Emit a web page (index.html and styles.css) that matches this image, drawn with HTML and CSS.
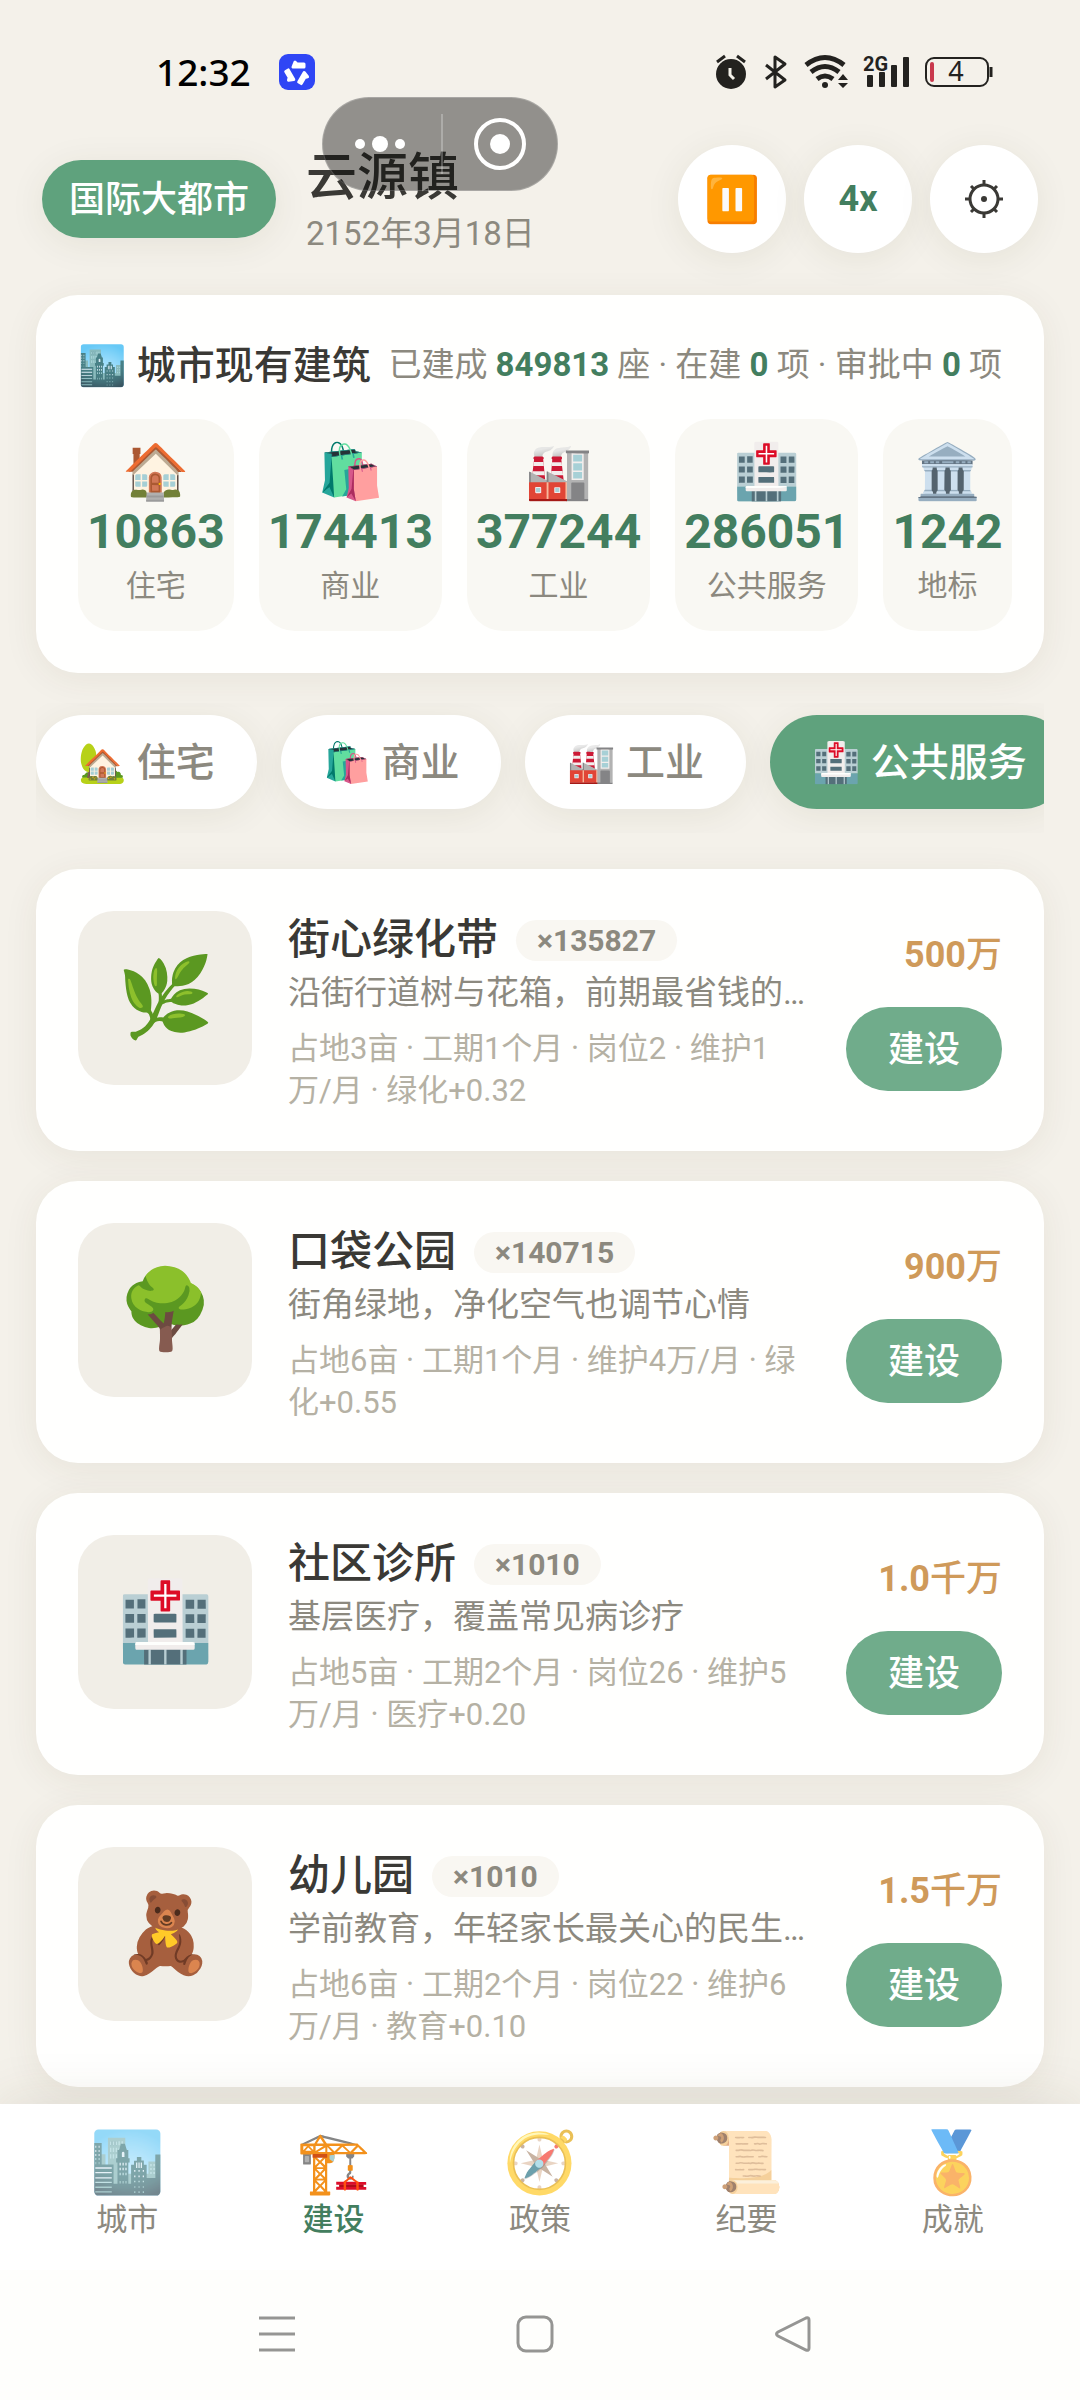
FILE: index.html
```html
<!DOCTYPE html>
<html lang="zh-CN">
  <head>
    <meta charset="UTF-8" />
    <meta name="viewport" content="width=device-width, initial-scale=1" />
    <title>云源镇</title>
    <link rel="stylesheet" href="styles.css" />
  </head>
  <body>
    <div class="app">
      <div class="statusbar">
        <span class="clock">12:32</span>
        <svg class="app-badge" viewBox="0 0 36 36" aria-hidden="true">
          <rect width="36" height="36" rx="9" fill="#2f46f5" />
          <g fill="#fff" stroke="#fff" stroke-width="3" stroke-linejoin="round">
            <path d="M16 8l-2 5h11v-3h-7z" />
            <path d="M16 8l-2 5h11v-3h-7z" transform="rotate(120 18 19)" />
            <path d="M16 8l-2 5h11v-3h-7z" transform="rotate(240 18 19)" />
          </g>
        </svg>
        <div class="status-icons">
          <svg width="32" height="36" viewBox="0 0 32 36" aria-hidden="true">
            <circle cx="16" cy="20" r="15" fill="#23221f" />
            <path d="M2 8l8-6M30 8l-8-6" stroke="#23221f" stroke-width="3" />
            <path d="M15 14v7l4 4" fill="none" stroke="#f4f1ea" stroke-width="3" />
          </svg>
          <svg width="26" height="36" viewBox="0 0 26 36" aria-hidden="true">
            <path d="M4 11l19 15-10 7V3l10 7L4 25" fill="none" stroke="#23221f" stroke-width="3" stroke-linejoin="round" />
          </svg>
          <svg width="45" height="36" viewBox="0 0 45 36" aria-hidden="true">
            <g fill="none" stroke="#23221f" stroke-width="5">
              <path d="M3 11q19-15 38 0" />
              <path d="M8 18q14-11 28 0" />
              <path d="M14 25q8-6 16 0" />
            </g>
            <circle cx="22" cy="31" r="3" fill="#23221f" />
            <path d="M40 20l5 6H35zM40 34l5-5H35z" fill="#23221f" />
          </svg>
          <svg width="47" height="36" viewBox="0 0 47 36" aria-hidden="true">
            <text class="net" x="0" y="17">2G</text>
            <g fill="#23221f">
              <rect x="4" y="21" width="6" height="12" rx="1" />
              <rect x="16" y="18" width="6" height="15" rx="1" />
              <rect x="28" y="11" width="6" height="22" rx="1" />
              <rect x="40" y="3" width="6" height="30" rx="1" />
            </g>
          </svg>
          <svg width="68" height="36" viewBox="0 0 68 36" aria-hidden="true">
            <rect x="1" y="4" width="62" height="28" rx="8" fill="none" stroke="#23221f" stroke-width="2" />
            <rect x="5" y="8" width="4" height="20" rx="2" fill="#c9394d" />
            <path d="M66 13v10" stroke="#23221f" stroke-width="3" />
            <text class="charge" x="31" y="27">4</text>
          </svg>
        </div>
      </div>

      <!-- host mini-program capsule, floats above the page -->
      <div class="capsule">
        <button class="capsule-btn" type="button" aria-label="更多">
          <svg width="52" height="52" viewBox="0 0 52 52" fill="#fff">
            <circle cx="6" cy="26" r="5" />
            <circle cx="26" cy="26" r="8" />
            <circle cx="46" cy="26" r="5" />
          </svg>
        </button>
        <button class="capsule-btn" type="button" aria-label="关闭">
          <svg width="52" height="52" viewBox="0 0 52 52">
            <circle cx="26" cy="26" r="24" fill="none" stroke="#fff" stroke-width="4" />
            <circle cx="26" cy="26" r="10" fill="#fff" />
          </svg>
        </button>
      </div>

      <header class="header">
        <span class="level">国际大都市</span>
        <div class="town">
          <h1>云源镇</h1>
          <time>2152年3月18日</time>
        </div>
        <div class="controls">
          <button class="round emoji" type="button" aria-label="暂停">⏸️</button>
          <button class="round speed" type="button">4x</button>
          <button class="round" type="button" aria-label="设置">
            <svg width="40" height="40" viewBox="0 0 40 40" fill="none" stroke="#3a3935">
              <circle cx="20" cy="20" r="14" stroke-width="3" />
              <path d="M20 6V1M20 34v5M6 20H1M34 20h5M10 10L7 7M30 10l3-3M10 30l-3 3M30 30l3 3" stroke-width="3" />
              <circle cx="20" cy="20" r="3" fill="#3a3935" stroke="none" />
            </svg>
          </button>
        </div>
      </header>

      <main>
        <section class="card summary">
          <div class="summary-head">
            <h2>🏙️ 城市现有建筑</h2>
            <p>已建成 <b>849813</b> 座 · 在建 <b>0</b> 项 · 审批中 <b>0</b> 项</p>
          </div>
          <div class="stats">
            <div class="stat"><span class="stat-icon">🏠</span><b>10863</b><span>住宅</span></div>
            <div class="stat"><span class="stat-icon">🛍️</span><b>174413</b><span>商业</span></div>
            <div class="stat"><span class="stat-icon">🏭</span><b>377244</b><span>工业</span></div>
            <div class="stat"><span class="stat-icon">🏥</span><b>286051</b><span>公共服务</span></div>
            <div class="stat"><span class="stat-icon">🏛️</span><b>1242</b><span>地标</span></div>
          </div>
        </section>

        <div class="tabs">
          <button class="tab" type="button">🏡 住宅</button>
          <button class="tab" type="button">🛍️ 商业</button>
          <button class="tab" type="button">🏭 工业</button>
          <button class="tab active" type="button">🏥 公共服务</button>
        </div>

        <div class="list">
          <article class="card item">
            <div class="thumb">🌿</div>
            <div class="info">
              <div class="name"><h3>街心绿化带</h3><span class="count">×135827</span></div>
              <p class="desc">沿街行道树与花箱，前期最省钱的…</p>
              <p class="spec">占地3亩 · 工期1个月 · 岗位2 · 维护1万/月 · 绿化+0.32</p>
            </div>
            <div class="buy">
              <span class="price">500<i>万</i></span>
              <button class="build" type="button">建设</button>
            </div>
          </article>

          <article class="card item">
            <div class="thumb">🌳</div>
            <div class="info">
              <div class="name"><h3>口袋公园</h3><span class="count">×140715</span></div>
              <p class="desc">街角绿地，净化空气也调节心情</p>
              <p class="spec">占地6亩 · 工期1个月 · 维护4万/月 · 绿化+0.55</p>
            </div>
            <div class="buy">
              <span class="price">900<i>万</i></span>
              <button class="build" type="button">建设</button>
            </div>
          </article>

          <article class="card item">
            <div class="thumb">🏥</div>
            <div class="info">
              <div class="name"><h3>社区诊所</h3><span class="count">×1010</span></div>
              <p class="desc">基层医疗，覆盖常见病诊疗</p>
              <p class="spec">占地5亩 · 工期2个月 · 岗位26 · 维护5万/月 · 医疗+0.20</p>
            </div>
            <div class="buy">
              <span class="price">1.0<i>千万</i></span>
              <button class="build" type="button">建设</button>
            </div>
          </article>

          <article class="card item">
            <div class="thumb">🧸</div>
            <div class="info">
              <div class="name"><h3>幼儿园</h3><span class="count">×1010</span></div>
              <p class="desc">学前教育，年轻家长最关心的民生…</p>
              <p class="spec">占地6亩 · 工期2个月 · 岗位22 · 维护6万/月 · 教育+0.10</p>
            </div>
            <div class="buy">
              <span class="price">1.5<i>千万</i></span>
              <button class="build" type="button">建设</button>
            </div>
          </article>
        </div>
      </main>

      <footer class="footer">
        <nav class="tabbar">
          <a href="#city"><span>🏙️</span>城市</a>
          <a class="active" href="#build"><span>🏗️</span>建设</a>
          <a href="#policy"><span>🧭</span>政策</a>
          <a href="#log"><span>📜</span>纪要</a>
          <a href="#awards"><span>🏅</span>成就</a>
        </nav>
        <div class="sysnav">
          <button type="button" aria-label="菜单">
            <svg width="36" height="36" viewBox="0 0 36 36"><path d="M0 2h36M0 18h36M0 34h36" /></svg>
          </button>
          <button type="button" aria-label="主页">
            <svg width="36" height="36" viewBox="0 0 36 36"><rect x="1" y="1" width="34" height="34" rx="8" /></svg>
          </button>
          <button type="button" aria-label="返回">
            <svg width="36" height="36" viewBox="0 0 36 36"><path d="M31 2L3 16q-3 2 0 4l28 14q3 1 3-2V4q0-3-3-2z" /></svg>
          </button>
        </div>
      </footer>
    </div>
  </body>
</html>
```
FILE: styles.css
```css
* {
  box-sizing: border-box;
}
body {
  margin: 0;
  background: #f4f1ea;
  color: #3a3935;
  font-family: Roboto, "Noto Sans CJK SC", sans-serif;
  font-size: 33px;
}
h1,
h2,
h3,
p {
  margin: 0;
  font-weight: 500;
}
button {
  border: none;
  padding: 0;
  background: none;
  font-family: inherit;
  color: inherit;
  cursor: pointer;
}
svg {
  display: block;
  flex: none;
  overflow: visible;
}
.app {
  position: relative;
  display: flex;
  flex-direction: column;
  min-height: 100vh;
}

/* Status bar */
.statusbar {
  display: flex;
  align-items: center;
  padding: 52px 87px 35px 156px;
}
.clock {
  font-family: "Noto Sans", "Open Sans", sans-serif;
  font-size: 37px;
  font-weight: 500;
  line-height: 40px;
  color: #000;
}
.app-badge {
  width: 36px;
  height: 36px;
  margin-left: 28px;
}
.status-icons {
  display: flex;
  gap: 15px;
  margin-left: auto;
}
.net {
  font: 700 20px Roboto, sans-serif;
  fill: #23221f;
}
.charge {
  font: 400 27px "Noto Sans", sans-serif;
  fill: #23221f;
  text-anchor: middle;
}

.capsule {
  position: absolute;
  z-index: 5;
  top: 97px;
  left: 322px;
  display: flex;
  width: 236px;
  height: 94px;
  border: 1px solid rgba(255, 255, 255, 0.2);
  border-radius: 47px;
  background: rgba(0, 0, 0, 0.4);
}
.capsule-btn {
  display: flex;
  flex: 1;
  align-items: center;
  justify-content: center;
}
.capsule-btn:first-child {
  align-self: center;
  height: 60px;
  padding-right: 4px;
  border-right: 2px solid rgba(255, 255, 255, 0.25);
}

/* Header */
.header {
  display: flex;
  align-items: center;
  gap: 30px;
  padding: 16px 42px 40px;
}
.level {
  padding: 3px 27px 0;
  border-radius: 39px;
  background: #5fa27d;
  box-shadow: 0 6px 36px rgba(70, 60, 30, 0.08);
  color: #fff;
  font-size: 36px;
  font-weight: 500;
  line-height: 75px;
}
.town h1 {
  font-size: 51px;
  line-height: 70px;
}
.town time {
  display: block;
  color: #8c897f;
  line-height: 42px;
}
.controls {
  display: flex;
  gap: 18px;
  margin-left: auto;
}
.round {
  display: flex;
  align-items: center;
  justify-content: center;
  width: 108px;
  height: 108px;
  border-radius: 50%;
  background: #fff;
  box-shadow: 0 6px 36px rgba(70, 60, 30, 0.08);
}
.emoji {
  font-size: 45px;
}
.speed {
  color: #437e5f;
  font-size: 36px;
  font-weight: 700;
}

/* Cards */
main {
  padding: 0 36px 16px;
}
.card {
  padding: 42px;
  border-radius: 42px;
  background: #fffffe;
  box-shadow: 0 6px 36px rgba(70, 60, 30, 0.07);
}
.summary-head {
  display: flex;
  align-items: center;
  justify-content: space-between;
  height: 50px;
  margin-bottom: 32px;
  white-space: nowrap;
}
.summary-head h2 {
  font-size: 39px;
}
.summary-head p {
  color: #8c897f;
  font-weight: 400;
}
.summary-head b {
  color: #437e5f;
}
.stats {
  display: flex;
  gap: 25px;
}
.stat {
  display: flex;
  flex: 1;
  flex-direction: column;
  align-items: center;
  padding: 21px 9px;
  border-radius: 36px;
  background: #f9f8f3;
  color: #8c897f;
  font-size: 30px;
  line-height: 49px;
  white-space: nowrap;
}
.stat-icon {
  font-size: 54px;
  line-height: 63px;
}
.stat b {
  color: #437e5f;
  font-size: 48px;
  line-height: 58px;
}

/* Category tabs */
.tabs {
  display: flex;
  gap: 24px;
  margin-top: 30px;
  padding: 12px 0 24px;
  overflow: hidden;
}
.tab {
  flex: none;
  padding: 2px 42px 0;
  border-radius: 47px;
  background: #fff;
  box-shadow: 0 6px 36px rgba(70, 60, 30, 0.08);
  color: #8c897f;
  font-size: 39px;
  font-weight: 500;
  line-height: 92px;
}
.tab.active {
  background: #5fa27d;
  color: #fff;
}

/* Building list */
.list {
  display: flex;
  flex-direction: column;
  gap: 30px;
  margin-top: 36px;
}
.item {
  display: flex;
  align-items: center;
  gap: 36px;
  padding-bottom: 39px;
}
.thumb {
  flex: none;
  align-self: flex-start;
  width: 174px;
  border-radius: 36px;
  background: #f1eee7;
  font-size: 78px;
  line-height: 174px;
  text-align: center;
}
.info {
  flex: 1;
  min-width: 0;
}
.name {
  display: flex;
  align-items: center;
  gap: 18px;
}
.name h3 {
  font-size: 42px;
  line-height: 58px;
}
.count {
  padding: 0 21px;
  border-radius: 21px;
  background: #f9f7f2;
  color: #8c897f;
  font-size: 30px;
  font-weight: 700;
  line-height: 41px;
}
.desc {
  overflow: hidden;
  color: #8c897f;
  font-weight: 400;
  line-height: 48px;
  text-overflow: ellipsis;
  white-space: nowrap;
}
.spec {
  margin-top: 11px;
  color: #b5b1a4;
  font-size: 31px;
  font-weight: 400;
  line-height: 42px;
}
.buy {
  display: flex;
  flex: none;
  flex-direction: column;
  align-items: flex-end;
  gap: 25px;
  padding-bottom: 4px;
}
.price {
  color: #cf9a5a;
  font-size: 36px;
  font-weight: 700;
  line-height: 54px;
}
.price i {
  font-style: normal;
  font-weight: 500;
}
.build {
  padding: 3px 42px 0;
  border-radius: 42px;
  background: #70ac8b;
  color: #fff;
  font-size: 36px;
  font-weight: 500;
  line-height: 81px;
}

/* Bottom navigation */
.footer {
  position: relative;
  margin-top: auto;
  background: #fefefc;
  box-shadow: 0 -6px 48px rgba(70, 60, 30, 0.1);
}
.tabbar {
  display: flex;
  padding: 26px 24px 27px;
  background: #fff;
}
.tabbar a {
  flex: 1;
  color: #8c897f;
  font-size: 31px;
  line-height: 47px;
  text-align: center;
  text-decoration: none;
}
.tabbar span {
  display: block;
  font-size: 60px;
  line-height: 66px;
  opacity: 0.7;
}
.tabbar .active {
  color: #437e5f;
  font-weight: 500;
}
.tabbar .active span {
  opacity: 1;
}
.sysnav {
  display: flex;
  justify-content: center;
  gap: 222px;
  padding: 46px 10px 48px 0;
}
.sysnav svg {
  fill: none;
  stroke: #959593;
  stroke-width: 3;
}
```
